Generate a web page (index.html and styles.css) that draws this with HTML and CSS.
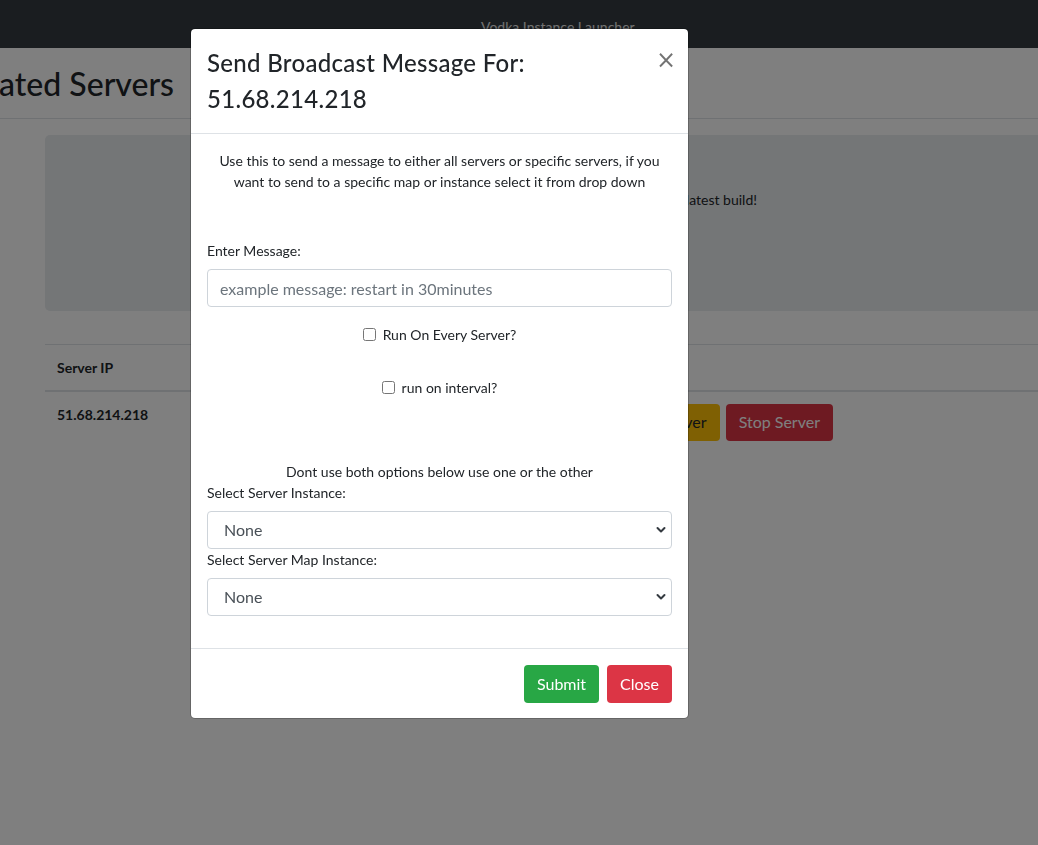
FILE: index.html
```html
<!DOCTYPE html>
<html lang="en">
<head>
<meta charset="utf-8">
<title>Vodka Instance Launcher</title>
<link rel="stylesheet" href="styles.css">
</head>
<body>
<nav class="navbar"><span class="brand">Vodka Instance Launcher</span></nav>
<main class="page">
  <header class="page-header">
    <div class="title-box"><h1 class="page-title">Activated Servers</h1></div>
  </header>
  <div class="content">
    <div class="jumbotron"><p class="jumbo-text">Welcome back! You are running the latest build!</p></div>
    <table class="table">
      <colgroup><col class="col-ip"><col class="col-actions"><col class="col-rest"></colgroup>
      <thead>
        <tr><th>Server IP</th><th>Actions</th><th></th></tr>
      </thead>
      <tbody>
        <tr>
          <th class="row-ip">51.68.214.218</th>
          <td><div class="actions"><button class="btn btn-warning">Restart Server</button><button class="btn btn-danger">Stop Server</button></div></td>
          <td></td>
        </tr>
      </tbody>
    </table>
  </div>
</main>
<div class="backdrop"></div>
<div class="modal">
  <div class="modal-header">
    <h4 class="modal-title">Send Broadcast Message For:<br>51.68.214.218</h4>
    <button class="close" type="button">&times;</button>
  </div>
  <div class="modal-body">
    <p class="intro">Use this to send a message to either all servers or specific servers, if you<br>want to send to a specific map or instance select it from drop down</p>
    <label class="form-label" for="msg">Enter Message:</label>
    <input class="form-control" id="msg" type="text" placeholder="example message: restart in 30minutes">
    <label class="check first"><input type="checkbox"><span>Run On Every Server?</span></label>
    <label class="check second"><input type="checkbox"><span>run on interval?</span></label>
    <p class="note">Dont use both options below use one or the other</p>
    <label class="select-label" for="inst">Select Server Instance:</label>
    <div class="select-wrap">
      <select class="form-select" id="inst"><option>None</option></select>
      <svg class="chev" width="10" height="8" viewBox="0 0 10 8"><path d="M1.5 2 L5 5.5 L8.5 2" fill="none" stroke="#343a40" stroke-width="2" stroke-linecap="round" stroke-linejoin="round"/></svg>
    </div>
    <label class="select-label second" for="map">Select Server Map Instance:</label>
    <div class="select-wrap last">
      <select class="form-select" id="map"><option>None</option></select>
      <svg class="chev" width="10" height="8" viewBox="0 0 10 8"><path d="M1.5 2 L5 5.5 L8.5 2" fill="none" stroke="#343a40" stroke-width="2" stroke-linecap="round" stroke-linejoin="round"/></svg>
    </div>
  </div>
  <div class="modal-footer">
    <button class="btn btn-success" type="button">Submit</button>
    <button class="btn btn-danger" type="button">Close</button>
  </div>
</div>
</body>
</html>
```

FILE: styles.css
```css
* { box-sizing: border-box; }
html, body { margin: 0; }
body {
  width: 1038px;
  height: 845px;
  overflow: hidden;
  position: relative;
  font-family: Lato, "Open Sans", sans-serif;
  font-size: 14px;
  line-height: 1.5;
  color: #212529;
  background: #fff;
}

.navbar {
  height: 48px;
  background: #343a40;
  display: flex;
  align-items: center;
  padding: 5px 0 0 481px;
}
.brand { color: #e4e4e4; font-size: 14px; line-height: 21px; }

.page-header {
  display: flex;
  align-items: center;
  height: 71px;
  padding-top: 3px;
  border-bottom: 1px solid #dee2e6;
}
.title-box { width: 174px; flex: none; display: flex; justify-content: flex-end; }
.page-title {
  flex: none;
  margin: 0;
  font-size: 32px;
  font-weight: 500;
  line-height: 1.2;
  white-space: nowrap;
}

.content { padding: 16px 0 0 45px; }
.jumbotron {
  width: 1100px;
  height: 176px;
  background: #e9ecef;
  border-radius: 5px;
  padding-top: 54px;
}
.jumbo-text { margin: 0; width: 712px; text-align: right; white-space: nowrap; }

.table {
  margin-top: 33px;
  width: 1100px;
  border-collapse: collapse;
  table-layout: fixed;
}
.col-ip { width: 300px; }
.col-actions { width: 500px; }
.col-rest { width: 300px; }
.table th, .table td {
  padding: 12px;
  border-top: 1px solid #dee2e6;
  text-align: left;
  vertical-align: top;
}
.table thead th { border-bottom: 2px solid #dee2e6; font-weight: 700; }
.row-ip { font-weight: 700; }
.actions { display: flex; justify-content: flex-end; gap: 6px; }
.actions .btn { padding: 5px 12px 6px; }

.btn {
  display: inline-block;
  font-family: inherit;
  font-size: 16px;
  line-height: 24px;
  padding: 6px 12px;
  border: 1px solid transparent;
  border-radius: 4px;
  white-space: nowrap;
}
.btn-warning { background: #ffc107; color: #212529; }
.btn-danger { background: #dc3545; color: #fff; }
.btn-success { background: #28a745; color: #fff; }

.backdrop { position: fixed; inset: 0; background: rgba(0, 0, 0, 0.5); }

.modal {
  position: absolute;
  left: 190px;
  top: 28px;
  width: 499px;
  background: #fff;
  background-clip: padding-box;
  border: 1px solid rgba(0, 0, 0, 0.2);
  border-radius: 5px;
}
.modal-header {
  display: flex;
  align-items: flex-start;
  justify-content: space-between;
  padding: 16px;
  border-bottom: 1px solid #dee2e6;
}
.modal-title {
  margin: 0;
  font-size: 24px;
  font-weight: 500;
  line-height: 1.5;
  letter-spacing: 0.3px;
}
.close {
  margin: -16px -16px -16px auto;
  padding: 19px 12px 13px 16px;
  background: none;
  border: 0;
  font-family: "DejaVu Sans", sans-serif;
  font-size: 24px;
  font-weight: 400;
  line-height: 1;
  color: #000;
  opacity: 0.55;
}

.modal-body { padding: 16px; }
.intro { margin: 0; text-align: center; }
.form-label { display: block; margin: 48px 0 8px; }
.form-control, .form-select {
  display: block;
  width: 100%;
  height: 38px;
  font-family: inherit;
  font-size: 16px;
  line-height: 24px;
  color: #495057;
  background: #fff;
  border: 1px solid #ced4da;
  border-radius: 4px;
}
.form-control { padding: 6px 12px; }
.form-control::placeholder { color: #6c757d; opacity: 1; }
.check {
  display: flex;
  justify-content: center;
  align-items: center;
  gap: 7px;
}
.check input { margin: 0; width: 13px; height: 13px; }
.check.first { margin-top: 17px; }
.check.second { margin-top: 32px; }
.note { margin: 63px 0 0; text-align: center; }
.select-label { display: block; margin-bottom: 8px; }
.select-label.second { margin-top: 0; margin-bottom: 8px; }
.select-wrap { position: relative; }
.select-wrap.last { margin-bottom: 16px; }
.form-select {
  appearance: none;
  -webkit-appearance: none;
  padding: 6px 36px 6px 16px;
}
.chev { position: absolute; right: 6px; top: 15px; pointer-events: none; }

.modal-footer {
  display: flex;
  justify-content: flex-end;
  gap: 8px;
  padding: 16px 16px 15px;
  border-top: 1px solid #dee2e6;
}
```
